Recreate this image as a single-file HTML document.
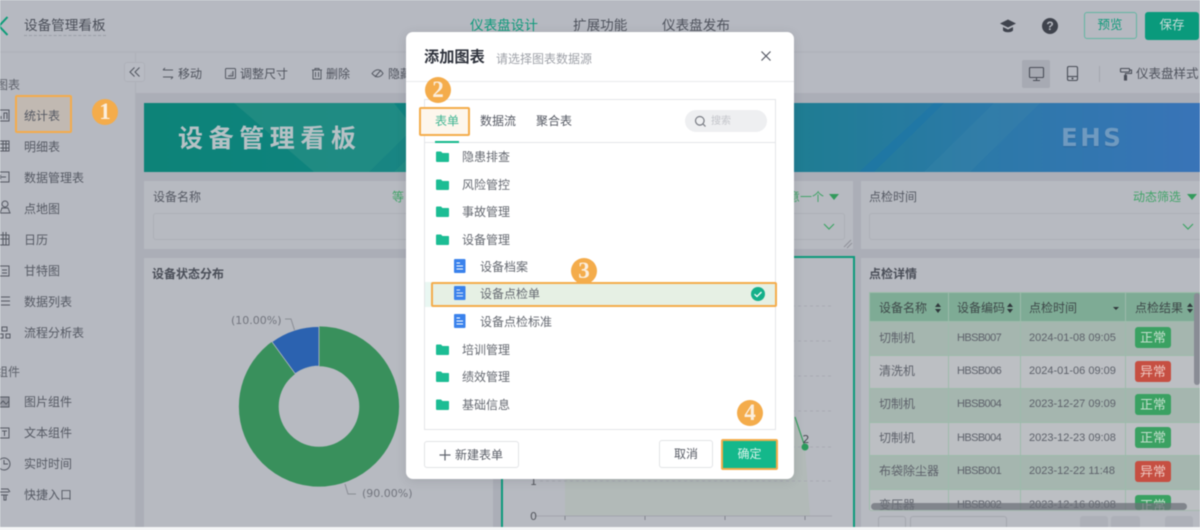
<!DOCTYPE html>
<html lang="zh"><head><meta charset="utf-8"><title>添加图表</title>
<style>
html,body{margin:0;padding:0;width:1200px;height:530px;overflow:hidden;background:#f4f5f6}
#r{position:absolute;left:0;top:0;width:1200px;height:530px;overflow:hidden;filter:blur(.45px);font-family:"Liberation Sans","Noto Sans CJK SC",sans-serif;font-size:12px;color:#50545e}
#r div,#r span.a,#r svg{position:absolute}
.t{white-space:nowrap;line-height:16px}
.side{color:#565a64}
.circle{width:26px;height:26px;border-radius:50%;background:#f4ac4b;color:#fbeedd;font:bold 23px/26px "Liberation Serif",serif;text-align:center}
.li{color:#666a72;white-space:nowrap;line-height:16px}
.td{white-space:nowrap;line-height:16px;color:#5e626b}
.c{letter-spacing:-.6px;font-size:11px}
.d{font-size:11px}
.tag{width:36px;height:21px;border-radius:3px;color:#c5dfce;font-size:13px;line-height:21px;text-align:center}
.g{background:#3aa162}.e{background:#c64f42;color:#eec9c2}
</style></head><body><div id="r">
<div style="left:0;top:0;width:1200px;height:527px;background:#b6b9c1"></div>
<!-- header -->
<div style="left:0;top:51px;width:1200px;height:2px;background:#b1b4bc"></div>
<svg style="left:0;top:14px" width="10" height="24" viewBox="0 0 10 24"><path d="M7.500 3 L-1 12 L7.500 21" fill="none" stroke="#0c9c78" stroke-width="2"/></svg>
<div class="t" style="left:24px;top:18px;font-size:13.600px;color:#4a4e58;border-bottom:1px dashed #9a9da6;padding-bottom:1px">设备管理看板</div>
<div class="t" style="left:470px;top:18px;font-size:13.600px;color:#0f9a7b">仪表盘设计</div>
<div class="t" style="left:573px;top:18px;font-size:13.600px;color:#4f535d">扩展功能</div>
<div class="t" style="left:662px;top:18px;font-size:13.600px;color:#4f535d">仪表盘发布</div>
<svg style="left:1000px;top:18px" width="16" height="16" viewBox="0 0 16 16"><path d="M0 5.500 8 1.500 16 5.500 8 9.500Z M3 9v3.500c2 2.400 8 2.400 10 0V9L8 11.500Z" fill="#3f434d"/></svg>
<div style="left:1042px;top:18px;width:16px;height:16px;border-radius:50%;background:#3f434d;color:#b6b9c1;font:bold 12px/16px 'Liberation Sans';text-align:center">?</div>
<div class="t" style="left:1083.500px;top:12px;width:53px;height:27px;box-sizing:border-box;border:1px solid #63b6a2;border-radius:3px;text-align:center;line-height:25px;color:#0f9a7b;font-size:12.500px">预览</div>
<div class="t" style="left:1145px;top:12px;width:54px;height:28px;border-radius:3px;background:#0a9a7c;text-align:center;line-height:27px;color:#c9dcd9;font-size:12.500px">保存</div>
<!-- sidebar -->
<div style="left:135px;top:53px;width:1px;height:474px;background:#adb0b8"></div>
<div class="t side" style="left:-4px;top:77px;color:#5f636c">图表</div>
<div style="left:15px;top:95px;width:57px;height:38px;box-sizing:border-box;border:2px solid #f4ac4b;background:#c1b9b2;border-radius:2px"></div>
<div class="t side" style="left:24px;top:108px">统计表</div>
<div class="t side" style="left:24px;top:139px">明细表</div>
<div class="t side" style="left:24px;top:170px">数据管理表</div>
<div class="t side" style="left:24px;top:201px">点地图</div>
<div class="t side" style="left:24px;top:232px">日历</div>
<div class="t side" style="left:24px;top:263px">甘特图</div>
<div class="t side" style="left:24px;top:294px">数据列表</div>
<div class="t side" style="left:24px;top:325px">流程分析表</div>
<div class="t side" style="left:-4px;top:364px;color:#5f636c">组件</div>
<div class="t side" style="left:24px;top:394px">图片组件</div>
<div class="t side" style="left:24px;top:425px">文本组件</div>
<div class="t side" style="left:24px;top:456px">实时时间</div>
<div class="t side" style="left:24px;top:487px">快捷入口</div>
<svg style="left:0;top:105px" width="12" height="400" viewBox="0 0 12 400" fill="none" stroke="#555963" stroke-width="1">
<path d="M-1 5H9V16H-1M1 14V11M4 14V8H7V14"/>
<path d="M-1 36H9V46H-1ZM-1 39H9M-1 43H9M3 36V46M6 36V46" stroke="#555963"/>
<path d="M-1 67H9V77H-1M-1 72H6M1 70-1 72 1 74"/>
<path d="M2 99a3 3 0 1 1 6 0 3 3 0 1 1-6 0M0 108 2 103H8L10 108Z"/>
<path d="M-1 130H9V140H-1ZM-1 134H9M3 127V140M6 127V140"/>
<path d="M-1 161H9V171H-1M2 165H7M2 168H7"/>
<path d="M1 192H10M1 196H10M1 200H10M-2 192H-0M-2 196H0M-2 200H0" />
<path d="M2 222H7V226H2ZM-1 229H3V233H-1ZM6 229H10V233H6Z"/>
<path d="M-1 292H9V302H-1ZM-1 300 3 296 6 299 9 296" fill="#555963" fill-opacity=".35"/>
<path d="M-1 323H9V333H-1ZM2 326H7M4.500 326V331"/>
<circle cx="4" cy="359" r="6"/><path d="M4 355V359H8"/>
<path d="M-1 387H9M1 384H8L10 387M1 390H8M4 390V395H6V390"/>
</svg>
<div class="circle" style="left:92px;top:99px">1</div>
<div style="left:124px;top:62px;width:21px;height:20px;box-sizing:border-box;border:1px solid #aeb1b9;border-radius:3px;background:#b8bbc3"></div>
<svg style="left:129px;top:66px" width="12" height="12" viewBox="0 0 12 12"><path d="M5.500 1.500 1 6 5.500 10.500M10.500 1.500 6 6 10.500 10.500" fill="none" stroke="#565a64" stroke-width="1.100"/></svg>
<!-- canvas -->
<div style="left:136px;top:93px;width:1064px;height:434px;background:#abaeb7"></div>
<svg style="left:160px;top:66px" width="400" height="16" viewBox="0 0 400 16" fill="none" stroke="#565a64" stroke-width="1">
<path d="M3 4H13M3 4 5 2M13 11H3M13 11 11 13"/>
<rect x="65.500" y="2.500" width="10" height="10" rx="1"/><path d="M68 10H73V5" fill="#565a64" fill-opacity=".3"/>
<path d="M152 4H162M155 4V2.500H159V4M153 4.500V13H161V4.500M155.500 6V11M158.500 6V11"/>
<path d="M212 7.500C216 2.500 220 2.500 223 7.500C220 12 216 12 212 7.500ZM215 11 221 4"/>
</svg>
<div class="t" style="left:178px;top:66px">移动</div>
<div class="t" style="left:240px;top:66px">调整尺寸</div>
<div class="t" style="left:326px;top:66px">删除</div>
<div class="t" style="left:388px;top:66px">隐藏</div>
<div style="left:1022px;top:60px;width:28px;height:28px;border-radius:2px;background:#a7aab3"></div>
<svg style="left:1028px;top:65px" width="60" height="18" viewBox="0 0 60 18" fill="none" stroke="#4a4e58" stroke-width="1.100">
<rect x="1.500" y="2.500" width="14" height="10" rx="1"/><path d="M5 15.500H12M8.500 13V15.500"/>
<rect x="39.500" y="1.500" width="10" height="14" rx="1.500"/><path d="M40 11.500H49" /><circle cx="44.500" cy="13.500" r=".5"/>
</svg>
<div style="left:1099px;top:66px;width:1px;height:16px;background:#a3a6ae"></div>
<svg style="left:1119px;top:67px" width="14" height="14" viewBox="0 0 14 14" fill="none" stroke="#4a4e58" stroke-width="1.100"><rect x="1.500" y="1.500" width="9" height="3.500" rx=".5"/><path d="M10.500 3H12.500V6.500H6.500V8.500"/><rect x="5.500" y="8.500" width="2" height="4.500" fill="#4a4e58"/></svg>
<div class="t" style="left:1136px;top:66px;font-size:12.500px;color:#4f535d">仪表盘样式</div>
<!-- banner -->
<div style="left:144px;top:103px;width:1056px;height:69px;background:linear-gradient(90deg,#0d8378 0%,#0f8382 30%,#1f7d93 62%,#2c79a9 80%,#3974b8 100%);overflow:hidden"></div>
<svg style="left:144px;top:103px" width="1056" height="69" viewBox="0 0 1056 69">
<path d="M90 0H250L305 69H170Z" fill="#36958a" fill-opacity=".45"/>
<path d="M225 69 295 0H320L250 69Z" fill="#0e7e83" fill-opacity=".4"/>
<path d="M340 69 400 10 440 0 380 69Z" fill="#2c9a92" fill-opacity=".35"/>
<path d="M780 69 850 0H896L826 69Z" fill="#3f88a8" fill-opacity=".3"/>
<path d="M715 69 790 0H800L730 69Z" fill="#1d74a8" fill-opacity=".6"/>
</svg>
<div class="t" style="left:178px;top:122px;font-size:25px;line-height:34px;font-weight:bold;color:#b6c1c5;letter-spacing:5.600px">设备管理看板</div>
<div class="t" style="left:1061px;top:125px;font:bold 24.500px/26px 'DejaVu Sans';letter-spacing:2.500px;color:#6f9ac0;text-shadow:0 1px 1px rgba(40,80,130,.4)">EHS</div>
<!-- filter cards -->
<div style="left:144px;top:181px;width:709px;height:68px;background:#b7bac1"></div>
<div style="left:861px;top:181px;width:339px;height:68px;background:#b7bac1"></div>
<div class="t" style="left:153px;top:189px;color:#565a64">设备名称</div>
<div class="t" style="left:392px;top:189px;color:#41a468">等</div>
<div style="left:153px;top:213px;width:280px;height:27px;box-sizing:border-box;border:1px solid #adb0b7;border-radius:3px"></div>
<div class="t" style="left:788px;top:189px;color:#41a468">意一个</div>
<div style="left:829px;top:194px;width:0;height:0;border:5px solid transparent;border-top:6px solid #339a5c;border-bottom:0"></div>
<div style="left:780px;top:213px;width:65px;height:27px;box-sizing:border-box;border:1px solid #adb0b7;border-radius:3px;border-left:0"></div>
<svg style="left:822px;top:221px" width="14" height="12" viewBox="0 0 14 12"><path d="M2 3 7 8 12 3" fill="none" stroke="#3ea565" stroke-width="1.200"/></svg>
<svg style="left:843px;top:239px" width="10" height="10" viewBox="0 0 10 10"><path d="M1 8 8 1M4 9 9 4" stroke="#8f929a" stroke-width="1"/></svg>
<div class="t" style="left:869px;top:189px;color:#565a64">点检时间</div>
<div class="t" style="left:1133px;top:189px;color:#41a468">动态筛选</div>
<div style="left:1187px;top:194px;width:0;height:0;border:5px solid transparent;border-top:6px solid #339a5c;border-bottom:0"></div>
<div style="left:869px;top:213px;width:340px;height:27px;box-sizing:border-box;border:1px solid #adb0b7;border-radius:3px"></div>
<svg style="left:1181px;top:221px" width="14" height="12" viewBox="0 0 14 12"><path d="M2 3 7 8 12 3" fill="none" stroke="#3ea565" stroke-width="1.200"/></svg>
<!-- left widget -->
<div style="left:144px;top:258px;width:349px;height:269px;background:#b7bac1"></div>
<div class="t" style="left:152px;top:266px;font-weight:bold;color:#4a4e58">设备状态分布</div>
<svg style="left:144px;top:258px" width="349" height="269" viewBox="144 258 349 269">
<circle cx="319" cy="406.500" r="60.200" fill="none" stroke="#39905c" stroke-width="39.800"/>
<path d="M319 326.500A80 80 0 0 0 272 341.800L295.200 373.700A40.500 40.500 0 0 1 319 366Z" fill="#2b62b0" stroke="#b7bac1" stroke-width=".8"/>
<path d="M285 319H291L294.500 330M345 484 348 494H356" fill="none" stroke="#8a8d95"/>
<text x="231" y="324" font-family="DejaVu Sans" font-size="11" fill="#73767f">(10.00%)</text>
<text x="362" y="497" font-family="DejaVu Sans" font-size="11" fill="#73767f">(90.00%)</text>
</svg>
<!-- middle widget -->
<div style="left:501px;top:256px;width:354px;height:271px;box-sizing:border-box;border:2px solid #0e9a7c;border-bottom:0;background:#b7bac1"></div>
<svg style="left:503px;top:258px" width="350" height="269" viewBox="503 258 350 269">
<path d="M565 516V470L795 417 805 447 810 516Z" fill="#b2bab8"/>
<path d="M540 306H832M540 341H832M540 376H832M540 411H832M540 447H832M540 481H832" stroke="#a8abb3" stroke-dasharray="3 3"/>
<path d="M535 516H832" stroke="#a2a5ad"/>
<path d="M565 516v4M645 516v4M725 516v4M805 516v4" stroke="#82858d"/>
<path d="M795 417 805 447" stroke="#3aa162" stroke-width="1.200"/>
<circle cx="805" cy="447" r="3.500" fill="#2c9a5c"/>
<text x="802.500" y="443" font-size="11" font-family="DejaVu Sans" fill="#45494f">2</text>
<text x="530" y="485" font-size="11" font-family="DejaVu Sans" fill="#55585f">1</text>
<text x="530" y="520" font-size="11" font-family="DejaVu Sans" fill="#55585f">0</text>
</svg>
<!-- right widget -->
<div style="left:861px;top:258px;width:339px;height:269px;background:#b7bac1"></div>
<div class="t" style="left:869px;top:266px;font-weight:bold;color:#4a4e58">点检详情</div>
<div style="left:870px;top:293px;width:330px;height:28px;background:#7eab95"></div>
<div style="left:870px;top:322px;width:330px;height:33px;background:#a5b6af"></div>
<div style="left:870px;top:356px;width:330px;height:32px;background:#bcbfc3"></div>
<div style="left:870px;top:389px;width:330px;height:33px;background:#a5b6af"></div>
<div style="left:870px;top:423px;width:330px;height:32px;background:#bcbfc3"></div>
<div style="left:870px;top:456px;width:330px;height:33px;background:#a5b6af"></div>
<div style="left:870px;top:490px;width:330px;height:20px;background:#bcbfc3"></div>
<div style="left:948px;top:292px;width:1px;height:218px;background:#9dbbab"></div>
<div style="left:1020px;top:292px;width:1px;height:218px;background:#9dbbab"></div>
<div style="left:1125px;top:292px;width:1px;height:218px;background:#9dbbab"></div>
<div style="left:869px;top:292px;width:1px;height:218px;background:#9dbbab"></div>
<div style="left:870px;top:292px;width:330px;height:1px;background:#9dbbab"></div>
<div style="left:870px;top:321px;width:330px;height:1px;background:#9dbbab"></div>
<div style="left:870px;top:355px;width:330px;height:1px;background:#9dbbab"></div>
<div style="left:870px;top:388px;width:330px;height:1px;background:#9dbbab"></div>
<div style="left:870px;top:422px;width:330px;height:1px;background:#9dbbab"></div>
<div style="left:870px;top:455px;width:330px;height:1px;background:#9dbbab"></div>
<div style="left:870px;top:489px;width:330px;height:1px;background:#9dbbab"></div>
<div class="td" style="left:879px;top:300px;color:#3f4a4a">设备名称</div>
<div class="td" style="left:957px;top:300px;color:#3f4a4a">设备编码</div>
<div class="td" style="left:1029px;top:300px;color:#3f4a4a">点检时间</div>
<div class="td" style="left:1135px;top:300px;color:#3f4a4a">点检结果</div>
<svg style="left:930px;top:302px" width="270" height="12" viewBox="930 302 270 12" fill="#30383c"><path d="M938 303 941 307H935ZM938 313 935 309H941ZM1010 303 1013 307H1007ZM1010 313 1007 309H1013ZM1113 307H1119L1116 310ZM1190 303 1193 307H1187ZM1190 313 1187 309H1193Z"/></svg>
<div class="td" style="left:879px;top:330px">切制机</div><div class="td c" style="left:957px;top:330px">HBSB007</div><div class="td d" style="left:1029px;top:330px">2024-01-08 09:05</div><div class="tag g" style="left:1135px;top:327px">正常</div>
<div class="td" style="left:879px;top:363px">清洗机</div><div class="td c" style="left:957px;top:363px">HBSB006</div><div class="td d" style="left:1029px;top:363px">2024-01-06 09:09</div><div class="tag e" style="left:1135px;top:361px">异常</div>
<div class="td" style="left:879px;top:396px">切制机</div><div class="td c" style="left:957px;top:396px">HBSB004</div><div class="td d" style="left:1029px;top:396px">2023-12-27 09:09</div><div class="tag g" style="left:1135px;top:394px">正常</div>
<div class="td" style="left:879px;top:430px">切制机</div><div class="td c" style="left:957px;top:430px">HBSB004</div><div class="td d" style="left:1029px;top:430px">2023-12-23 09:08</div><div class="tag g" style="left:1135px;top:427px">正常</div>
<div class="td" style="left:879px;top:463px">布袋除尘器</div><div class="td c" style="left:957px;top:463px">HBSB001</div><div class="td d" style="left:1029px;top:463px">2023-12-22 11:48</div><div class="tag e" style="left:1135px;top:461px">异常</div>
<div class="td" style="left:879px;top:497px">变压器</div><div class="td c" style="left:957px;top:497px">HBSB002</div><div class="td d" style="left:1029px;top:497px">2023-12-16 09:08</div><div class="tag g" style="left:1135px;top:495px;height:15px;overflow:hidden">正常</div>
<div style="left:871px;top:503px;width:316px;height:7px;border-radius:4px;background:rgba(110,113,122,.75)"></div>
<div style="left:1194px;top:293px;width:6px;height:92px;border-radius:3px;background:#898c95"></div>
<div style="left:870px;top:510px;width:330px;height:17px;background:#b7bac1;border-top:1px solid #a5b9af;box-sizing:border-box"></div>
<div style="left:878px;top:516px;width:28px;height:11px;box-sizing:border-box;border:1px solid #a4a7af;border-bottom:0;border-radius:3px 3px 0 0"></div>
<div style="left:910px;top:516px;width:97px;height:11px;box-sizing:border-box;border:1px solid #a4a7af;border-bottom:0;border-radius:3px 3px 0 0"></div>
<div style="left:1080px;top:516px;width:28px;height:11px;background:#adb0b8;border-radius:3px 3px 0 0"></div>
<div style="left:1111px;top:516px;width:29px;height:11px;background:#adb0b8;border-radius:3px 3px 0 0"></div>
<div style="left:1165px;top:516px;width:28px;height:11px;background:#adb0b8;border-radius:3px 3px 0 0"></div>
<!-- modal -->
<div style="left:406px;top:32px;width:388px;height:447px;background:#fff;border-radius:7px;box-shadow:0 2px 10px rgba(60,60,70,.15)"></div>
<div class="t" style="left:424px;top:49px;font-size:15.200px;line-height:18px;font-weight:bold;color:#2f333d">添加图表</div>
<div class="t" style="left:496px;top:51px;color:#9ea1a8">请选择图表数据源</div>
<svg style="left:760px;top:50px" width="12" height="12" viewBox="0 0 12 12"><path d="M1.500 1.500 10.500 10.500M10.500 1.500 1.500 10.500" stroke="#555963" stroke-width="1.200"/></svg>
<div style="left:406px;top:81px;width:388px;height:1px;background:#e9eaec"></div>
<div style="left:424px;top:99px;width:352px;height:331px;box-sizing:border-box;border:1px solid #e4e5e8"></div>
<div style="left:425px;top:142px;width:350px;height:1px;background:#e4e5e8"></div>
<div style="left:419px;top:107px;width:51px;height:29px;box-sizing:border-box;border:2px solid #f4ac4b;background:#fdf6ec;border-radius:2px"></div>
<div class="t" style="left:435px;top:113px;color:#3fb593">表单</div>
<div style="left:435px;top:141px;width:24px;height:2px;background:#14b88b"></div>
<div class="t" style="left:480px;top:113px;color:#565a64">数据流</div>
<div class="t" style="left:536px;top:113px;color:#565a64">聚合表</div>
<div style="left:685px;top:110px;width:82px;height:22px;border-radius:11px;background:#eeeff1"></div>
<svg style="left:694px;top:115px" width="13" height="13" viewBox="0 0 13 13"><circle cx="5.800" cy="5.800" r="4.300" fill="none" stroke="#777a82" stroke-width="1.200"/><path d="M9 9 11.500 11.500" stroke="#777a82" stroke-width="1.200"/></svg>
<div class="t" style="left:711px;top:114px;font-size:10px;color:#c3c5ca">搜索</div>
<!-- selected row -->
<div style="left:425px;top:282px;width:350px;height:25px;background:#e9f7f2"></div>
<div style="left:431px;top:282px;width:346px;height:25px;box-sizing:border-box;border:2px solid #f4ac4b;background:#e6f0e4;border-radius:2px"></div>
<svg style="left:436px;top:150px" width="14" height="262" viewBox="0 0 14 262" fill="#1cbd94">
<path d="M0 2.500Q0 1.500 1 1.500H5L6.500 3H12.500Q13 3 13 4V11Q13 12 12 12H1Q0 12 0 11Z"/>
<path transform="translate(0,28)" d="M0 2.500Q0 1.500 1 1.500H5L6.500 3H12.500Q13 3 13 4V11Q13 12 12 12H1Q0 12 0 11Z"/>
<path transform="translate(0,55)" d="M0 2.500Q0 1.500 1 1.500H5L6.500 3H12.500Q13 3 13 4V11Q13 12 12 12H1Q0 12 0 11Z"/>
<path transform="translate(0,83)" d="M0 2.500Q0 1.500 1 1.500H5L6.500 3H12.500Q13 3 13 4V11Q13 12 12 12H1Q0 12 0 11Z"/>
<path transform="translate(0,193)" d="M0 2.500Q0 1.500 1 1.500H5L6.500 3H12.500Q13 3 13 4V11Q13 12 12 12H1Q0 12 0 11Z"/>
<path transform="translate(0,220)" d="M0 2.500Q0 1.500 1 1.500H5L6.500 3H12.500Q13 3 13 4V11Q13 12 12 12H1Q0 12 0 11Z"/>
<path transform="translate(0,248)" d="M0 2.500Q0 1.500 1 1.500H5L6.500 3H12.500Q13 3 13 4V11Q13 12 12 12H1Q0 12 0 11Z"/>
</svg>
<svg style="left:454px;top:259px" width="12" height="70" viewBox="0 0 12 70">
<g><rect x="0" y="0" width="11.500" height="14" rx="1" fill="#3a82ec"/><path d="M2.500 4H6M2.500 7H9M2.500 10H9" stroke="#fff" stroke-width="1"/></g>
<g transform="translate(0,27)"><rect x="0" y="0" width="11.500" height="14" rx="1" fill="#3a82ec"/><path d="M2.500 4H6M2.500 7H9M2.500 10H9" stroke="#dfe9f7" stroke-width="1"/></g>
<g transform="translate(0,55)"><rect x="0" y="0" width="11.500" height="14" rx="1" fill="#3a82ec"/><path d="M2.500 4H6M2.500 7H9M2.500 10H9" stroke="#fff" stroke-width="1"/></g>
</svg>
<div class="li" style="left:462px;top:149px">隐患排查</div>
<div class="li" style="left:462px;top:177px">风险管控</div>
<div class="li" style="left:462px;top:204px">事故管理</div>
<div class="li" style="left:462px;top:232px">设备管理</div>
<div class="li" style="left:480px;top:259px">设备档案</div>
<div class="li" style="left:480px;top:286px">设备点检单</div>
<div class="li" style="left:480px;top:314px">设备点检标准</div>
<div class="li" style="left:462px;top:342px">培训管理</div>
<div class="li" style="left:462px;top:369px">绩效管理</div>
<div class="li" style="left:462px;top:397px">基础信息</div>
<svg style="left:751px;top:287px" width="14" height="14" viewBox="0 0 14 14"><circle cx="7" cy="7" r="7" fill="#14b08a"/><path d="M3.500 7.200 6 9.500 10.500 5" fill="none" stroke="#fff" stroke-width="1.300"/></svg>
<div class="circle" style="left:425px;top:77px">2</div>
<div class="circle" style="left:571px;top:258px">3</div>
<div class="circle" style="left:737px;top:400px">4</div>
<div style="left:424px;top:441px;width:95px;height:27px;box-sizing:border-box;border:1px solid #e2e3e6;border-radius:3px"></div>
<svg style="left:439px;top:449px" width="12" height="12" viewBox="0 0 12 12"><path d="M6 .5V11.500M.5 6H11.500" stroke="#60646d" stroke-width="1.200"/></svg>
<div class="t" style="left:455px;top:447px;color:#5b5f68">新建表单</div>
<div class="t" style="left:659px;top:440px;width:54px;height:28px;box-sizing:border-box;border:1px solid #e2e3e6;border-radius:3px;text-align:center;line-height:27px;color:#5b5f68">取消</div>
<div class="t" style="left:721px;top:439px;width:57px;height:31px;box-sizing:border-box;border:2px solid #f4ac4b;background:#14b88b;border-radius:2px;text-align:center;line-height:27px;color:#d8f3ea">确定</div>
</div></body></html>
